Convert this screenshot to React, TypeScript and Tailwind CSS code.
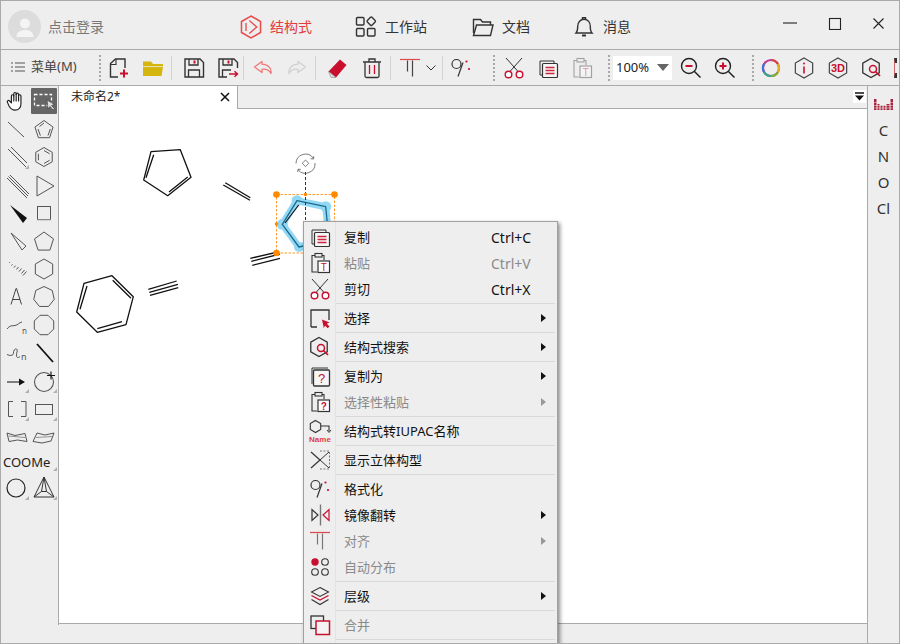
import React from "react";

const RED = "#c8102e";
const DK = "#333";

function ngon(cx: number, cy: number, r: number, n: number, rot = -90) {
  const p: string[] = [];
  for (let i = 0; i < n; i++) {
    const a = ((rot + (360 / n) * i) * Math.PI) / 180;
    p.push(`${(cx + r * Math.cos(a)).toFixed(2)},${(cy + r * Math.sin(a)).toFixed(2)}`);
  }
  return p.join(" ");
}

function Ico({ s = 24, children, className }: { s?: number; children: React.ReactNode; className?: string }) {
  return (
    <svg width={s} height={s} viewBox="0 0 24 24" fill="none" className={className}>
      {children}
    </svg>
  );
}

/* ---------- Shared icons ---------- */
const CopyIcon = () => (
  <Ico>
    <path d="M6 19H4V5h14v2.500" stroke={DK} strokeWidth="1" />
    <rect x="6.5" y="7.500" width="15" height="14" rx="1" fill="#f6f6f6" stroke={DK} strokeWidth="1.2" />
    <path d="M9.500 11.500h9M9.500 14.500h9M9.500 17.500h9" stroke={RED} strokeWidth="1.3" opacity="0.9" />
  </Ico>
);
const PasteIcon = ({ c = DK, t = RED, ch = "T" }: { c?: string; t?: string; ch?: string }) => (
  <Ico>
    <path d="M16 9V4.500h-2M9 21H4V4.500h3" stroke={c} strokeWidth="1.1" />
    <rect x="7" y="2.500" width="7" height="3.500" fill="none" stroke={c} strokeWidth="1.1" />
    <rect x="10" y="10" width="11.5" height="11.5" fill="#fff" stroke={c} strokeWidth="1.2" />
    <text x="15.7" y="19.7" textAnchor="middle" fontSize="10" fontWeight={ch === "T" ? 400 : 700} fill={t} fontFamily="Liberation Sans">{ch}</text>
  </Ico>
);
const ScissorsIcon = () => (
  <Ico>
    <path d="M4 2l12.5 14M20 2L7.500 16" stroke={DK} strokeWidth="1" />
    <circle cx="6.500" cy="18.500" r="3.300" stroke={RED} strokeWidth="1.400" fill="#fff" />
    <circle cx="17.500" cy="18.500" r="3.300" stroke={RED} strokeWidth="1.400" fill="#fff" />
  </Ico>
);
const FormatIcon = ({ s = 24 }: { s?: number }) => (
  <Ico s={s}>
    <circle cx="7.500" cy="8" r="4.500" stroke={DK} strokeWidth="1.200" />
    <path d="M14 6.500L9 20.500" stroke={DK} strokeWidth="1.200" />
    <circle cx="17.500" cy="5.500" r="1.100" fill={RED} />
    <circle cx="20" cy="13" r="1.100" fill={RED} />
  </Ico>
);
const SearchHex = () => (
  <Ico>
    <polygon points={ngon(11, 12, 9.5, 6)} stroke={DK} strokeWidth="1.300" fill="none" />
    <circle cx="13" cy="13" r="3.500" stroke={RED} strokeWidth="1.500" fill="#eee" />
    <path d="M15.500 15.500l4.500 4.500" stroke={RED} strokeWidth="1.700" />
  </Ico>
);
const AlignIcon = ({ c = "#444", top = "#e04a4a" }: { c?: string; top?: string }) => (
  <Ico>
    <path d="M2 3.500h20" stroke={top} strokeWidth="1.200" />
    <path d="M9.500 4.500v11M14.500 4.500v16" stroke={c} strokeWidth="1.200" />
  </Ico>
);

/* ---------- Toolbar ---------- */
function Btn({ children, className = "" }: { children: React.ReactNode; className?: string }) {
  return <div className={`w-[30px] h-[30px] flex items-center justify-center shrink-0 ${className}`}>{children}</div>;
}
const Sep = ({ className = "" }: { className?: string }) => (
  <div className={`w-px h-[24px] bg-[#d4d4d4] shrink-0 ${className}`} />
);
const Dots = ({ className = "" }: { className?: string }) => (
  <div className={`w-px h-[26px] shrink-0 border-l-2 border-dotted border-[#a8a8a8] ${className}`} />
);

function Toolbar() {
  return (
    <div className="h-[36px] shrink-0 flex items-center border-b border-[#aaaaaa] overflow-hidden">
      <div className="w-[97px] shrink-0 flex items-center pl-[10px] mb-[2px]">
        <svg width="14" height="12" viewBox="0 0 14 12">
          <path d="M0 2h2M0 6h2M0 10h2M4 2h10M4 6h10M4 10h10" stroke="#555" strokeWidth="1" />
        </svg>
        <span className="ml-[6px] text-[13px] text-[#444]">菜单(M)</span>
      </div>
      <Dots className="ml-px" />
      <Btn className="ml-[3px]">
        <Ico>
          <path d="M11 21H3.500V7.500L8.500 3H18v9" stroke={DK} strokeWidth="1.400" />
          <path d="M3.500 8.500h5.500V3" stroke={DK} strokeWidth="1.100" />
          <path d="M13 17.500h8M17 13.500v8" stroke={RED} strokeWidth="2" />
        </Ico>
      </Btn>
      <Btn className="ml-[4px]">
        <Ico>
          <path d="M2 5.500h8l2 2.500h10v3H2z" fill="#d4b60f" />
          <path d="M2 11h20l-1.500 9H2z" fill="#d4b60f" />
          <path d="M2 10.600h20" stroke="#eee" strokeWidth=".8" />
        </Ico>
      </Btn>
      <Sep className="ml-[3px]" />
      <Btn className="ml-[7px]">
        <Ico>
          <path d="M3 3h15l3.500 3.500V21H3z" stroke={DK} strokeWidth="1.400" />
          <path d="M7 3v6h9V3" stroke={DK} strokeWidth="1.300" />
          <rect x="11.500" y="4.500" width="2" height="3" fill={RED} />
          <path d="M6.500 21v-7h11v7" stroke={DK} strokeWidth="1.300" />
        </Ico>
      </Btn>
      <Btn className="ml-[4px]">
        <Ico>
          <path d="M11 21H3V3h15l3.500 3.500V12" stroke={DK} strokeWidth="1.400" />
          <path d="M7 3v6h9V3" stroke={DK} strokeWidth="1.300" />
          <rect x="11.500" y="4.500" width="2" height="3" fill={RED} />
          <path d="M6.500 21v-7H15" stroke={DK} strokeWidth="1.300" />
          <path d="M13 18h8M18.500 15.300L21.500 18l-3 2.700" stroke={RED} strokeWidth="1.400" />
        </Ico>
      </Btn>
      <Sep />
      <Btn className="ml-[4px]">
        <Ico>
          <path d="M11 5.500L3.500 11l7.500 5.500v-3.200c4-.5 7 .5 9 4.200 .8-5-2.500-9-9-9.300z" stroke="#e77" strokeWidth="1.300" strokeLinejoin="round" />
        </Ico>
      </Btn>
      <Btn className="ml-[4px]">
        <Ico>
          <path d="M13 5.500L20.500 11 13 16.500v-3.200c-4-.5-7 .5-9 4.200-.8-5 2.500-9 9-9.300z" stroke="#d0d0d0" strokeWidth="1.300" strokeLinejoin="round" />
        </Ico>
      </Btn>
      <Sep className="ml-[3px]" />
      <Btn className="ml-[6px]">
        <Ico>
          <path d="M15 3.500l6.500 5.500-10.500 12.500-7.500-6z" fill={RED} />
          <path d="M3.500 15.500l7.500 6H6z" fill="#ddd" stroke="#888" strokeWidth=".6" />
        </Ico>
      </Btn>
      <Btn className="ml-[5px]">
        <Ico>
          <path d="M3 6h18M9 6V3h6v3" stroke={DK} strokeWidth="1.300" />
          <path d="M5 6.500V20a1.500 1.500 0 001.500 1.500h11A1.500 1.500 0 0019 20V6.500" stroke={DK} strokeWidth="1.300" />
          <path d="M9.500 9v9M14.500 9v9" stroke={RED} strokeWidth="1.300" />
        </Ico>
      </Btn>
      <Sep className="ml-[3px]" />
      <Btn className="ml-[4px]">
        <AlignIcon />
      </Btn>
      <svg width="10" height="6" viewBox="0 0 10 6" className="shrink-0 ml-px">
        <path d="M.5.5L5 5 9.500.5" stroke="#333" fill="none" strokeWidth="1" />
      </svg>
      <Sep className="ml-[6px]" />
      <Btn className="ml-[3px]">
        <FormatIcon />
      </Btn>
      <Dots className="ml-[17px]" />
      <Btn className="ml-[4px]">
        <ScissorsIcon />
      </Btn>
      <Btn className="ml-[4px]">
        <CopyIcon />
      </Btn>
      <Btn className="ml-[4px] opacity-40">
        <PasteIcon />
      </Btn>
      <Dots className="ml-[11px]" />
      <div className="ml-[3px] w-[59px] h-[24px] bg-white flex items-center shrink-0 pl-[3px]">
        <span className="text-[13px] text-[#222]">100%</span>
        <svg width="12" height="7" viewBox="0 0 12 7" className="ml-[8px]">
          <path d="M0 0h12L6 7z" fill="#666" />
        </svg>
      </div>
      <Btn className="ml-[4px]">
        <Ico>
          <circle cx="10" cy="10" r="7.500" stroke="#222" strokeWidth="1.400" />
          <path d="M6.500 10h7" stroke={RED} strokeWidth="2" />
          <path d="M15.500 15.500l6 6" stroke="#222" strokeWidth="1.500" />
        </Ico>
      </Btn>
      <Btn className="ml-[4px]">
        <Ico>
          <circle cx="10" cy="10" r="7.500" stroke="#222" strokeWidth="1.400" />
          <path d="M6.500 10h7M10 6.500v7" stroke={RED} strokeWidth="2" />
          <path d="M15.500 15.500l6 6" stroke="#222" strokeWidth="1.500" />
        </Ico>
      </Btn>
      <Dots className="ml-[12px]" />
      <Btn className="ml-[2px]">
        <Ico>
          <circle cx="12" cy="12" r="8" stroke="#c33a9a" strokeWidth="2.200" />
          <path d="M12 4a8 8 0 016.900 4" stroke="#d8483a" strokeWidth="2.200" />
          <path d="M18.900 8a8 8 0 01-.2 8.300" stroke="#e0b020" strokeWidth="2.200" />
          <path d="M18.700 16.300A8 8 0 0112 20" stroke="#7bb32e" strokeWidth="2.200" />
          <path d="M12 20a8 8 0 01-7-4" stroke="#35a88a" strokeWidth="2.200" />
          <path d="M5 16a8 8 0 01.2-8.300" stroke="#3a78d0" strokeWidth="2.200" />
        </Ico>
      </Btn>
      <Btn className="ml-[3px]">
        <Ico>
          <polygon points={ngon(12, 12, 10, 6)} stroke="#444" strokeWidth="1.200" />
          <circle cx="12" cy="7.500" r="1" fill={RED} />
          <path d="M12 10.500v7" stroke={RED} strokeWidth="1.600" />
        </Ico>
      </Btn>
      <Btn className="ml-[4px]">
        <Ico>
          <polygon points={ngon(12, 12, 10, 6)} stroke="#444" strokeWidth="1.200" />
          <text x="12" y="16" textAnchor="middle" fontSize="11" fontWeight="700" fill={RED} fontFamily="Liberation Sans">3D</text>
        </Ico>
      </Btn>
      <Btn className="ml-[4px]">
        <SearchHex />
      </Btn>
      <div className="ml-[7px] w-[3px] h-[20px] shrink-0 border-y-[5px] border-[#333] border-l border-l-[#c66]" />
    </div>
  );
}

/* ---------- Title bar ---------- */
function TitleBar() {
  return (
    <div className="h-[49px] shrink-0 flex items-center border-b border-[#aaaaaa] pt-[3px]">
      <div className="ml-[7px] w-[33px] h-[33px] rounded-full bg-[#dcdcdc] flex items-center justify-center overflow-hidden shrink-0">
        <svg width="24" height="24" viewBox="0 0 24 24">
          <circle cx="12" cy="8.500" r="5" fill="#f4f4f4" />
          <path d="M3.500 22c0-5 3.500-7 8.500-7s8.500 2 8.500 7a2 2 0 01-2 0H5.500a2 2 0 01-2 0z" fill="#f4f4f4" />
        </svg>
      </div>
      <span className="ml-[7px] w-[56px] text-[14px] text-[#777] shrink-0">点击登录</span>
      <div className="ml-[135px] flex items-center shrink-0">
        <svg width="24" height="24" viewBox="0 0 24 24" fill="none">
          <polygon points={ngon(12, 12, 11, 6)} stroke="#e84a4a" strokeWidth="1.500" />
          <path d="M7 8v8M10.300 5.500l7.500 6.500-7.500 6.500" stroke="#e84a4a" strokeWidth="1.300" />
        </svg>
        <span className="ml-[7px] text-[14px] text-[#e23c3c]">结构式</span>
      </div>
      <div className="ml-[43px] flex items-center shrink-0">
        <svg width="22" height="22" viewBox="0 0 22 22" fill="none" stroke="#333" strokeWidth="1.400">
          <rect x="1.500" y="1.500" width="7.500" height="7.500" rx="1" />
          <rect x="1.500" y="12.500" width="7.500" height="7.500" rx="1" />
          <rect x="12.500" y="12.500" width="7.500" height="7.500" rx="1" />
          <rect x="13" y="2" width="6.500" height="6.500" transform="rotate(45 16.250 5.250)" rx="1" />
        </svg>
        <span className="ml-[8px] text-[14px] text-[#333]">工作站</span>
      </div>
      <div className="ml-[45px] flex items-center shrink-0">
        <svg width="22" height="22" viewBox="0 0 22 22" fill="none" stroke="#333" strokeWidth="1.400">
          <path d="M1.500 17V3.500h7l2 2.500h8V9" />
          <path d="M1.500 19.500L4.500 9H21l-2.500 10.500z" />
        </svg>
        <span className="ml-[8px] text-[14px] text-[#333]">文档</span>
      </div>
      <div className="ml-[43px] flex items-center shrink-0">
        <svg width="22" height="22" viewBox="0 0 22 22" fill="none" stroke="#333" strokeWidth="1.400">
          <path d="M3 17c1.500-1.500 1.700-3 1.700-6.500C4.700 6 7.500 3.300 11 3.300s6.300 2.700 6.300 7.200c0 3.500.2 5 1.700 6.500z" />
          <path d="M9.500 3V1.800h3V3" />
          <path d="M9 19.500h4" strokeWidth="2" />
        </svg>
        <span className="ml-[8px] text-[14px] text-[#333]">消息</span>
      </div>
      <div className="ml-auto flex items-center shrink-0">
        <svg width="116" height="16" viewBox="0 0 116 16" fill="none" stroke="#222" strokeWidth="1.100" className="mb-[9px]">
          <path d="M0 9h14" />
          <rect x="46.500" y="4.500" width="11" height="11" />
          <path d="M90.500 4.500l10 10M100.500 4.500l-10 10" />
        </svg>
      </div>
    </div>
  );
}

/* ---------- Left tools ---------- */
const Corner = () => (
  <span className="absolute right-[1px] bottom-[2px] w-0 h-0 border-l-[4px] border-l-transparent border-b-[4px] border-b-[#b0b0b0]" />
);

function Tool({ children, corner }: { children?: React.ReactNode; corner?: boolean }) {
  return (
    <div className="relative h-[28px] w-[28px] flex items-center justify-center">
      {children}
      {corner && <Corner />}
    </div>
  );
}

function T({ children }: { children: React.ReactNode }) {
  return (
    <svg width="28" height="28" viewBox="0 0 28 28" fill="none" stroke="#555" strokeWidth="1">
      {children}
    </svg>
  );
}

function LeftTools() {
  return (
    <div className="w-[58px] h-[539px] shrink-0 border-r border-[#aaaaaa] pt-px pl-px">
      <div className="grid grid-cols-[28px_28px]">
        <Tool>
          <svg width="22" height="22" viewBox="0 0 24 24" fill="#fff" stroke="#222" strokeWidth="1.300" strokeLinejoin="round" strokeLinecap="round">
            <path d="M7 13V6.500a1.300 1.300 0 012.600 0V4a1.300 1.300 0 012.600 0v.8a1.300 1.300 0 012.600 0V6.500a1.300 1.300 0 012.600 0V15c0 4-2.500 7-6.500 7-3.500 0-5-2-6.500-4.500L2.700 13.500c-.8-1.500 1-2.800 2.300-1.500L7 14z" />
            <path d="M9.600 6v6M12.200 4.500V12M14.800 5v7" />
          </svg>
        </Tool>
        <div className="relative h-[28px] w-[28px] flex items-center justify-center">
          <div className="w-[26px] h-[26px] bg-[#666666] rounded-[1px] flex items-center justify-center">
            <svg width="24" height="24" viewBox="0 0 24 24" fill="none">
              <rect x="2.500" y="5.500" width="17" height="11" stroke="#fff" strokeWidth="1.300" strokeDasharray="3 2" />
              <path d="M15 11l1 9 2-2.500 3 3.500 1.500-1.200-3-3.300 3-1z" fill="#ddd" stroke="#333" strokeWidth=".6" />
            </svg>
          </div>
        </div>

        <Tool><T><path d="M6 7l16 15" /></T></Tool>
        <Tool>
          <T>
            <polygon points={ngon(14, 15, 9.500, 5)} />
            <path d="M8 14l2.400 6.600M18 20.500L20.300 14M9.500 11.500L14 8" />
          </T>
        </Tool>

        <Tool corner><T><path d="M6 6l18 18M9 4l16 16" /></T></Tool>
        <Tool>
          <T>
            <polygon points={ngon(14, 14, 9.500, 6)} />
            <path d="M14 7.500l5.600 3.250M19.600 17.250L14 20.500M8.400 17.250v-6.500" />
          </T>
        </Tool>

        <Tool><T><path d="M5 7l20 20M8 4l19 19M6.500 5.500l19.500 19.500" /></T></Tool>
        <Tool><T><polygon points="7,5 24,15 7,25" /></T></Tool>

        <Tool>
          <svg width="28" height="28" viewBox="0 0 28 28"><polygon points="8,6 25,19 21,24" fill="#111" /></svg>
        </Tool>
        <Tool>
          <T>
            <rect x="7.500" y="7.500" width="13" height="13" />
            <path d="M7 21h14" stroke="#bbb" />
          </T>
        </Tool>

        <Tool><T><polygon points="9,6 24,19 20,23" /></T></Tool>
        <Tool><T><polygon points={ngon(14, 15, 10, 5)} /></T></Tool>

        <Tool>
          <T>
            <path d="M7 8l.7-.7M9.500 10.500l1-1.200M12 12.500l1.500-1.800M14.500 14.500l2-2.500M17 16.500l2.500-3M19.500 18.500l3-3.500M21 20.500l3.500-4" />
          </T>
        </Tool>
        <Tool><T><polygon points={ngon(14, 14, 10, 6)} /></T></Tool>

        <Tool>
          <svg width="28" height="28" viewBox="0 0 28 28" fill="none" stroke="#444" strokeWidth="1">
            <path d="M9 21.500L14 5.500h.5L19.500 21.500M10.500 16.500h7.500" />
          </svg>
        </Tool>
        <Tool><T><polygon points={ngon(14, 14, 10.500, 7)} /></T></Tool>

        <Tool>
          <div className="absolute left-0 top-0">
            <T>
              <path d="M5 18c3-4 5-3 8-3.500s4-3 7-3.500" />
            </T>
          </div>
          <span className="absolute left-[20px] top-[16px] text-[8px] leading-none text-[#555]">n</span>
        </Tool>
        <Tool><T><polygon points={ngon(14, 14, 10.500, 8, 22.500)} /></T></Tool>

        <Tool>
          <div className="absolute left-0 top-0">
            <T>
              <path d="M5 15.500c3 1.500 5 1 6 0s0-5 2.500-5.500c2-.3 2 1.500 1.500 3s-1 5 .5 5.500c1 .3 2-.5 2.500-1" />
            </T>
          </div>
          <span className="absolute left-[19px] top-[13px] text-[9px] leading-none text-[#555]">n</span>
        </Tool>
        <Tool>
          <svg width="28" height="28" viewBox="0 0 28 28"><path d="M7 5l16 18" stroke="#111" strokeWidth="1.800" /></svg>
        </Tool>

        <Tool corner>
          <svg width="28" height="28" viewBox="0 0 28 28">
            <path d="M5 15h14" stroke="#222" strokeWidth="1.100" />
            <path d="M23 15l-6-3.500v7z" fill="#111" />
          </svg>
        </Tool>
        <Tool corner>
          <T>
            <circle cx="14" cy="15" r="9.500" strokeWidth="1.100" />
            <path d="M17 8.500h8M21 4.500v8" stroke="#111" strokeWidth="1.100" />
          </T>
        </Tool>

        <Tool corner>
          <T>
            <path d="M11 6.500H6.500v15H11M19 6.500h5v15h-5" />
          </T>
        </Tool>
        <Tool corner><T><rect x="5.500" y="9.500" width="17" height="10" /></T></Tool>

        <Tool>
          <T>
            <path d="M5 10l8 2.500 10-2 2 8-9.500-1.500L7 18.500z" />
            <path d="M6.500 13l16.500 1.500" opacity=".6" />
          </T>
        </Tool>
        <Tool>
          <T>
            <path d="M3 18.500l4-8.500 8 2 9-2-3 8-9 2z" />
            <path d="M6 14.500l16-1" opacity=".6" />
          </T>
        </Tool>
      </div>
      <div className="relative h-[22px] flex items-center pl-[1px] mb-[1px]">
        <span className="text-[13px] leading-none text-[#222]">COOMe</span>
        <Corner />
      </div>
      <div className="grid grid-cols-[28px_28px]">
        <Tool corner>
          <svg width="28" height="28" viewBox="0 0 28 28" fill="none"><circle cx="14" cy="14" r="9" stroke="#222" strokeWidth="1.200" /></svg>
        </Tool>
        <Tool corner>
          <svg width="28" height="28" viewBox="0 0 28 28" fill="none" stroke="#333" strokeWidth="1">
            <path d="M14 3L4 23h20zM14 3l-2.500 14.500L4 23M14 3l2.500 14.500L24 23M11.500 17.500h5" />
          </svg>
        </Tool>
      </div>
    </div>
  );
}

/* ---------- Canvas ---------- */
function Molecules() {
  const halo = "#90d8f6";
  return (
    <svg width="808" height="514" viewBox="59 109 808 514" className="block" fill="none">
      <g stroke="#111" strokeWidth="1.300" strokeLinejoin="round">
        <polygon points="151,151.700 180.300,149.700 191,177.300 167.700,195.700 143.700,180" />
        <path d="M153.700 154.700L146 177.700M187.700 177L169 192" />
        <path d="M223.300 185L250 200.300M225.300 182.700L250.300 197.700" />
        <path d="M250.300 258.300L278 252M251.300 261.300L280 254M252.300 265.300L280 258.300" />
        <path d="M148.300 289.300L176.700 281M149.300 292.300L178 284.300M150 295.300L178.300 287.700" />
        <polygon points="84,283.300 112,275.700 133.300,296.700 126,324.700 97.300,332.300 76.700,312" />
        <path d="M87 286L80 309.300M112.700 280.300L131 298.300M122 321.700L97.300 328.700" />
      </g>
      {/* selected ring */}
      <polygon points="297,200.700 325.700,206.700 329,240 299,247 282.300,224.300" stroke={halo} strokeWidth="7" strokeLinejoin="round" />
      <circle cx="297" cy="200.700" r="5.500" fill={halo} />
      <circle cx="325.700" cy="206.700" r="5.500" fill={halo} />
      <circle cx="282.300" cy="224.300" r="5.500" fill={halo} />
      <circle cx="299" cy="247" r="5" fill={halo} />
      <polygon points="297,200.700 325.700,206.700 329,240 299,247 282.300,224.300" stroke="#1f6a88" strokeWidth="1.300" strokeLinejoin="round" />
      <path d="M298.700 205L285 223" stroke="#111" strokeWidth="1.200" />
      <path d="M305.500 172V253" stroke="#333" strokeWidth="1" strokeDasharray="3 2" />
      <rect x="276.500" y="194.500" width="58" height="58.500" stroke="#ff9a2e" strokeWidth="1" strokeDasharray="2.500 1.500" />
      <circle cx="276.500" cy="194.500" r="3.300" fill="#ff8a00" />
      <circle cx="334.500" cy="194.500" r="3.300" fill="#ff8a00" />
      <circle cx="276.500" cy="253" r="3.300" fill="#ff8a00" />
      <circle cx="305.500" cy="194.500" r="1.800" fill="#ff8a00" />
      <circle cx="276.500" cy="224" r="1.800" fill="#ff8a00" />
      {/* rotate handle */}
      <g stroke="#444" strokeWidth=".7">
        <path d="M296 163.500A9.500 9.500 0 01313.500 158.500M315 163A9.500 9.500 0 01298 169.500" />
        <path d="M310.500 158.700l3 .3.300-2.800M300.800 169.300l-2.800 0-.3 2.800" />
        <polygon points="305.500,160 308.800,163.300 305.500,166.600 302.200,163.300" fill="#fff" />
      </g>
    </svg>
  );
}

/* ---------- Context menu ---------- */
function Item({
  icon,
  label,
  shortcut,
  arrow,
  disabled,
}: {
  icon?: React.ReactNode;
  label: string;
  shortcut?: string;
  arrow?: boolean;
  disabled?: boolean;
}) {
  return (
    <div className={`relative h-[26px] flex items-center text-[13px] ${disabled ? "text-[#8a8a8a]" : "text-[#111]"}`}>
      <div className="w-[31px] h-[26px] flex items-center justify-center shrink-0 pl-[1px]">{icon}</div>
      <span className="ml-[9px] pt-[2px]">{label}</span>
      {shortcut && <span className="absolute left-[187px] text-[14px]">{shortcut}</span>}
      {arrow && (
        <svg width="5" height="8" viewBox="0 0 5 8" className="absolute left-[237px]">
          <path d="M0 0l5 4-5 4z" fill={disabled ? "#999" : "#111"} />
        </svg>
      )}
    </div>
  );
}
const MSep = () => (
  <div className="h-[3px] flex items-center pl-[31px] pr-[2px]">
    <div className="h-px w-full bg-[#d9d9d9]" />
  </div>
);

function ContextMenu() {
  return (
    <div className="absolute left-[302px] top-[220px] w-[255px] h-[430px] bg-[#eeeeee] border border-[#a0a0a0] pt-[2px] shadow-[2px_2px_4px_rgba(0,0,0,0.45)]">
      <div className="absolute left-[31px] top-0 bottom-0 w-px bg-[#e3e3e3]" />
      <Item icon={<CopyIcon />} label="复制" shortcut="Ctrl+C" />
      <Item icon={<PasteIcon />} label="粘贴" shortcut="Ctrl+V" disabled />
      <Item icon={<ScissorsIcon />} label="剪切" shortcut="Ctrl+X" />
      <MSep />
      <Item
        icon={
          <Ico>
            <path d="M3 21V4h18v10M3 21h6" stroke={DK} strokeWidth="1.300" />
            <path d="M14 13.500l7.500 3-2.700 1.300 2.700 2.700-1.800 1.800-2.700-2.700-1.200 2.700z" fill={RED} />
          </Ico>
        }
        label="选择"
        arrow
      />
      <MSep />
      <Item icon={<SearchHex />} label="结构式搜索" arrow />
      <MSep />
      <Item
        icon={
          <Ico>
            <path d="M4 20V4h16" stroke={DK} strokeWidth="1" />
            <rect x="5.500" y="6" width="16" height="16" rx="1" stroke={DK} strokeWidth="1.300" fill="#f6f6f6" />
            <text x="13.500" y="18.500" textAnchor="middle" fontSize="13" fontWeight="400" fill={RED} fontFamily="Liberation Sans">?</text>
          </Ico>
        }
        label="复制为"
        arrow
      />
      <Item icon={<PasteIcon ch="?" />} label="选择性粘贴" arrow disabled />
      <MSep />
      <Item
        icon={
          <Ico>
            <polygon points={ngon(7.500, 7.500, 6, 6)} stroke={DK} strokeWidth="1.100" />
            <path d="M13 7h8v5" stroke={DK} strokeWidth="1.100" />
            <path d="M19 11l2 2.500 2-2.500" stroke={DK} strokeWidth="1" />
            <text x="12" y="22.500" textAnchor="middle" fontSize="8" fontWeight="700" fill="#e0404a" fontFamily="Liberation Sans">Name</text>
          </Ico>
        }
        label="结构式转IUPAC名称"
      />
      <MSep />
      <Item
        icon={
          <Ico>
            <path d="M3 4l9 8-9 8" stroke={DK} strokeWidth="1.200" />
            <path d="M12 12l9-8M12 12l9 8" stroke={DK} strokeWidth="1" />
            <path d="M12 3h9.500v18H12" stroke="#777" strokeWidth="1" strokeDasharray="2 1.500" />
          </Ico>
        }
        label="显示立体构型"
      />
      <MSep />
      <Item icon={<FormatIcon />} label="格式化" />
      <Item
        icon={
          <Ico>
            <path d="M4 6.500v11l6-5.500z" stroke={DK} strokeWidth="1.200" />
            <path d="M12.500 1.500v21" stroke="#777" strokeWidth="1.400" />
            <path d="M21 6.500v11l-6-5.500z" stroke={RED} strokeWidth="1.200" />
          </Ico>
        }
        label="镜像翻转"
        arrow
      />
      <Item icon={<AlignIcon c="#777" top="#d84a4a" />} label="对齐" arrow disabled />
      <Item
        icon={
          <Ico>
            <circle cx="7" cy="7" r="3.700" fill={RED} />
            <circle cx="17" cy="7" r="3.300" stroke={DK} strokeWidth="1.100" />
            <circle cx="7" cy="17" r="3.300" stroke={DK} strokeWidth="1.100" />
            <circle cx="17" cy="17" r="3.300" stroke={DK} strokeWidth="1.100" />
          </Ico>
        }
        label="自动分布"
        disabled
      />
      <MSep />
      <Item
        icon={
          <Ico>
            <path d="M12 3.500l8.500 4.500-8.500 4.500L3.500 8z" stroke={DK} strokeWidth="1.100" />
            <path d="M3.500 11.500l8.500 4.500 8.500-4.500" stroke={RED} strokeWidth="1.300" />
            <path d="M3.500 15.500l8.500 5 8.500-5" stroke={DK} strokeWidth="1.100" />
          </Ico>
        }
        label="层级"
        arrow
      />
      <MSep />
      <Item
        icon={
          <Ico>
            <rect x="3" y="3" width="12.500" height="12.500" stroke={DK} strokeWidth="1.300" />
            <rect x="8" y="8" width="13.500" height="13.500" stroke={RED} strokeWidth="1.500" fill="#f4f4f4" />
          </Ico>
        }
        label="合并"
        disabled
      />
      <MSep />
    </div>
  );
}

/* ---------- Page ---------- */
export default function App() {
  return (
    <div className="relative w-[900px] h-[644px] overflow-hidden bg-[#eeeeee] border border-[#aaaaaa] flex flex-col font-['Noto_Sans','Noto_Sans_CJK_SC',sans-serif]">
      <TitleBar />
      <Toolbar />
      <div className="flex flex-1 min-h-0">
        <LeftTools />
        <div className="flex-1 min-w-0 flex flex-col">
          <div className="h-[23px] shrink-0 flex border-b border-[#aaaaaa] relative">
            <div className="w-[179px] h-[23px] bg-white border-r border-[#aaaaaa] flex items-center pl-[12px] pr-[6px] pb-[2px] text-[12px] text-[#222] z-10">
              未命名2*
              <svg width="10" height="10" viewBox="0 0 10 10" className="ml-auto mr-[1px]">
                <path d="M1 1l8 8M9 1l-8 8" stroke="#111" strokeWidth="1.500" />
              </svg>
            </div>
            <div className="ml-auto mr-[1px] mt-[4px] w-[13px] h-[13px] bg-white flex items-center justify-center">
              <svg width="9" height="9" viewBox="0 0 9 9">
                <path d="M0 1h9" stroke="#111" strokeWidth="1.500" />
                <path d="M0 3.500h9L4.500 8.500z" fill="#111" />
              </svg>
            </div>
          </div>
          <div className="h-[514px] shrink-0 bg-white overflow-hidden">
            <Molecules />
          </div>
          <div className="flex-1 border-t border-[#aaaaaa]" />
        </div>
        <div className="w-[32px] shrink-0 border-l border-[#aaaaaa] pt-[5px] flex flex-col items-center text-[15px] text-[#333]">
          <div className="h-[26px] flex items-center justify-center">
            <svg width="19" height="11" viewBox="0 0 19 11">
              <path d="M0 0h2.500v11H0zM16.500 0H19v11h-2.500zM3.500 5h2v6h-2zM6.500 6.500h2V11h-2zM9.500 6.500h2V11h-2zM12.500 5h3v6h-3z" fill="#a8243c" />
              <path d="M0 3.500h19M0 6.500h19M0 9h19" stroke="#eee" strokeWidth=".5" />
            </svg>
          </div>
          <div className="h-[26px] flex items-center">C</div>
          <div className="h-[26px] flex items-center">N</div>
          <div className="h-[26px] flex items-center">O</div>
          <div className="h-[26px] flex items-center">Cl</div>
        </div>
      </div>
      <ContextMenu />
    </div>
  );
}
